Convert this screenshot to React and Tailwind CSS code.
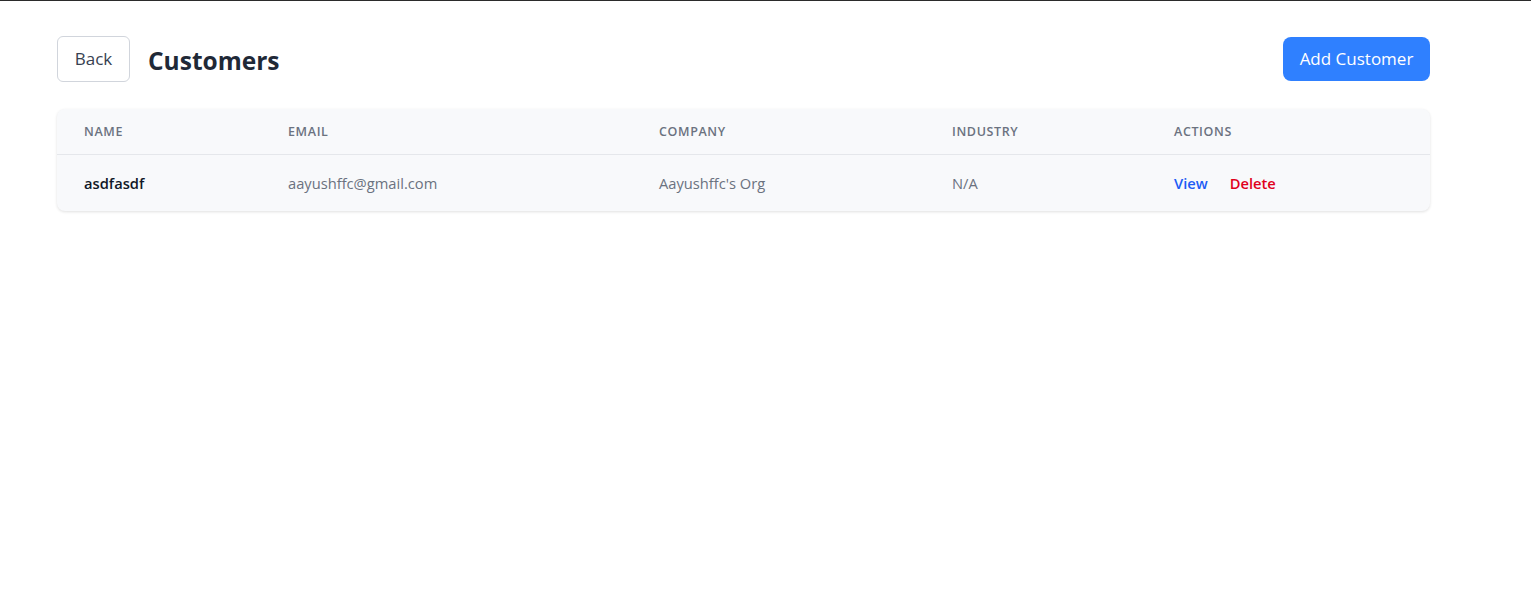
export default function App() {
  const customers = [
    { id: 1, name: 'asdfasdf', email: 'aayushffc@gmail.com', company: "Aayushffc's Org", industry: 'N/A' },
  ]

  return (
    <div className="min-h-screen bg-white border-t border-[#2b2b2b] font-['Open_Sans',sans-serif]">
      <div className="ml-[57px] w-[1373px] pt-[35px]">
        <header className="flex items-center justify-between">
          <div className="flex items-center gap-[18px]">
            <button className="h-[46px] w-[73px] rounded-md border border-gray-300 bg-white text-[17px] text-[#374151]">
              Back
            </button>
            <h1 className="mt-[5px] text-[24.5px] font-bold text-[#1f2937]">Customers</h1>
          </div>
          <button className="h-[44px] w-[147px] rounded-lg bg-[#2f80ff] text-[17px] text-white">
            Add Customer
          </button>
        </header>

        <div className="mt-[27px] overflow-hidden rounded-lg bg-[#f8f9fb] shadow-[0_1px_3px_rgba(0,0,0,0.12)]">
          <table className="w-full table-fixed text-left">
            <colgroup>
              <col className="w-[204px]" />
              <col className="w-[371px]" />
              <col className="w-[293px]" />
              <col className="w-[222px]" />
              <col />
            </colgroup>
            <thead>
              <tr className="border-b border-gray-200">
                <th className="h-[45px] pl-[27px] pt-[2px] text-[12.5px] font-semibold uppercase tracking-wider text-[#6b7280]">Name</th>
                <th className="h-[45px] pl-[27px] pt-[2px] text-[12.5px] font-semibold uppercase tracking-wider text-[#6b7280]">Email</th>
                <th className="h-[45px] pl-[27px] pt-[2px] text-[12.5px] font-semibold uppercase tracking-wider text-[#6b7280]">Company</th>
                <th className="h-[45px] pl-[27px] pt-[2px] text-[12.5px] font-semibold uppercase tracking-wider text-[#6b7280]">Industry</th>
                <th className="h-[45px] pl-[27px] pt-[2px] text-[12.5px] font-semibold uppercase tracking-wider text-[#6b7280]">Actions</th>
              </tr>
            </thead>
            <tbody>
              {customers.map((c) => (
                <tr key={c.id}>
                  <td className="h-[57px] pl-[27px] text-[14.7px] font-semibold text-[#111827]">{c.name}</td>
                  <td className="h-[57px] pl-[27px] text-[14.7px] text-[#6b7280]">{c.email}</td>
                  <td className="h-[57px] pl-[27px] text-[14.7px] text-[#6b7280]">{c.company}</td>
                  <td className="h-[57px] pl-[27px] text-[14.7px] text-[#6b7280]">{c.industry}</td>
                  <td className="h-[57px] pl-[27px] text-[14.7px] font-semibold">
                    <span className="text-[#1d5cf5]">View</span>
                    <span className="ml-[22px] text-[#e0001b]">Delete</span>
                  </td>
                </tr>
              ))}
            </tbody>
          </table>
        </div>
      </div>
    </div>
  )
}
